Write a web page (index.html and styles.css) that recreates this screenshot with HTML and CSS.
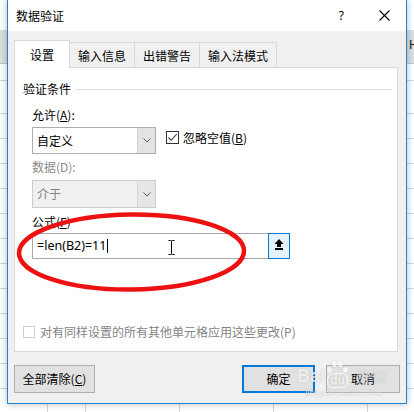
FILE: index.html
```html
<!DOCTYPE html>
<html lang="zh-CN">
<head>
<meta charset="utf-8">
<title>数据验证</title>
<link rel="stylesheet" href="styles.css">
</head>
<body>
<div class="sheet">
  <div class="edge-left"></div>
  <div class="dialog">
    <div class="titlebar">
      <span class="title">数据验证</span>
      <span class="help">?</span>
      <span class="close"><svg width="11" height="11" viewBox="0 0 11 11"><path d="M0.5 0.5L10.5 10.5M10.5 0.5L0.5 10.5" stroke="#000" stroke-width="1.1" fill="none"/></svg></span>
    </div>
    <div class="body">
      <div class="tabs">
        <div class="tab active">设置</div>
        <div class="tab">输入信息</div>
        <div class="tab">出错警告</div>
        <div class="tab">输入法模式</div>
      </div>
      <div class="panel">
        <div class="group-head"><span>验证条件</span><i class="rule"></i></div>
        <div class="fields">
          <div class="label">允许(<u>A</u>):</div>
          <div class="row">
            <div class="combo">
              <span class="combo-text">自定义</span>
              <span class="combo-btn"><svg width="8" height="5" viewBox="0 0 8 5"><path d="M0.5 0.5L4 4L7.5 0.5" stroke="#606060" fill="none"/></svg></span>
            </div>
            <div class="check">
              <span class="box checked"><svg width="11" height="11" viewBox="0 0 11 11"><path d="M1.5 5.5L4.2 8.3L9.8 2" stroke="#333" stroke-width="1.1" fill="none"/></svg></span>
              <span>忽略空值(<u>B</u>)</span>
            </div>
          </div>
          <div class="label disabled">数据(D):</div>
          <div class="combo disabled">
            <span class="combo-text">介于</span>
            <span class="combo-btn"><svg width="8" height="5" viewBox="0 0 8 5"><path d="M0.5 0.5L4 4L7.5 0.5" stroke="#606060" fill="none"/></svg></span>
          </div>
          <div class="label formula-label">公式(<u>F</u>)</div>
          <div class="formula">
            <span class="formula-text">=len(B2)=11<i class="caret"></i></span>
            <span class="ibeam"><svg width="7" height="15" viewBox="0 0 7 15"><path d="M0.5 0.5H2.5Q3.5 0.5 3.5 1.5V13.5Q3.5 14.5 2.5 14.5H0.5M6.5 0.5H4.5Q3.5 0.5 3.5 1.5M3.5 13.5Q3.5 14.5 4.5 14.5H6.5" stroke="#000" stroke-width="1" fill="none"/></svg></span>
            <span class="ref-btn"><svg width="10" height="11" viewBox="0 0 10 11"><polygon points="5,0 9.5,5 0.5,5" fill="#000"/><rect x="3" y="5" width="4" height="3" fill="#000"/><rect x="1" y="9" width="8" height="2" fill="#000"/></svg></span>
          </div>
        </div>
        <div class="apply"><span class="box"></span><span>对有同样设置的所有其他单元格应用这些更改(P)</span></div>
        <svg class="ellipse" width="240" height="90" viewBox="0 0 240 90"><ellipse cx="116.5" cy="43" rx="112.5" ry="37.5" fill="none" stroke="#ee1111" stroke-width="4.5" transform="rotate(-0.6 116.5 43)"/></svg>
      </div>
      <div class="buttons">
        <div class="btn clear">全部清除(<u>C</u>)</div>
        <div class="btn ok">确定</div>
        <div class="btn cancel">取消</div>
      </div>
    </div>
    <div class="watermark">
      <span class="wm-bai">Bai</span>
      <span class="wm-paw">
        <i class="toe t1"></i><i class="toe t2"></i><i class="toe t3"></i><i class="toe t4"></i>
        <span class="wm-du">du</span>
      </span>
      <span class="wm-jy">经验</span>
      <span class="wm-url">jingyan.baidu.com</span>
    </div>
  </div>
  <div class="edge-right"><div class="colhead">H</div></div>
</div>
</body>
</html>
```

FILE: styles.css
```css
html, body {
  margin: 0;
  padding: 0;
}
body {
  width: 414px;
  height: 412px;
  overflow: hidden;
  font-family: "Noto Sans CJK SC", "Noto Sans", sans-serif;
  font-size: 12px;
  color: #000;
}
u { text-decoration: underline; text-underline-offset: 1px; }

.sheet {
  display: flex;
  width: 414px;
  height: 412px;
  background-color: #fff;
  background-image:
    linear-gradient(to bottom, transparent 30px, #dedede 30px, #dedede 63px, #c6c6c6 63px, #c6c6c6 64px, transparent 64px),
    linear-gradient(to bottom, transparent 80px, #d6d6d6 80px, #d6d6d6 81px, transparent 81px),
    repeating-linear-gradient(to bottom, #d6d6d6 0 1px, transparent 1px 25px),
    repeating-linear-gradient(to right, #d6d6d6 0 1px, transparent 1px 94px);
  background-size: 100% 100%, 100% 100%, 100% 300px, 100% 100%;
  background-position: 0 0, 0 0, 0 113px, 85px 0;
  background-repeat: no-repeat, no-repeat, no-repeat, repeat-x;
}
.edge-left { width: 7px; flex: none; }
.edge-right {
  width: 7px;
  flex: none;
  overflow: hidden;
  padding-top: 30px;
}
.colhead {
  height: 33px;
  line-height: 30px;
  padding-left: 2px;
  font-family: "Liberation Sans", sans-serif;
  font-size: 13px;
  color: #222;
}

/* dialog */
.dialog {
  position: relative;
  flex: none;
  width: 400px;
  height: 404px;
  box-sizing: border-box;
  border: 1px solid #1a82d8;
  border-top: none;
  background: #f0f0f0;
  box-shadow: 0 0 7px rgba(0,0,0,0.28);
  z-index: 1;
}
.titlebar {
  height: 31px;
  background: #fff;
  display: flex;
  align-items: center;
  padding-left: 8px;
  padding-right: 16px;
}
.title { font-size: 12px; line-height: 16px; }
.help {
  margin-left: auto;
  font-family: "Noto Sans", sans-serif;
  font-size: 12px;
  line-height: 16px;
}
.close {
  margin-left: 35px;
  display: flex;
  width: 11px;
  height: 11px;
}

.body {
  padding: 9px 6px 0 6px;
}
.tabs {
  display: flex;
  align-items: flex-end;
  height: 27px;
}
.tab {
  height: 25px;
  box-sizing: border-box;
  border: 1px solid #d9d9d9;
  border-bottom: none;
  background: #f0f0f0;
  padding: 0 8px;
  line-height: 25px;
  margin-left: -1px;
  white-space: nowrap;
}
.tab.active {
  position: relative;
  z-index: 2;
  height: 28px;
  margin-bottom: -1px;
  margin-left: 0;
  padding: 2px 15px 0 15px;
  line-height: 24px;
  background: #fff;
}

.panel {
  position: relative;
  width: 384px;
  height: 285px;
  box-sizing: border-box;
  border: 1px solid #d9d9d9;
  background: #fff;
  padding: 13px 6px 0 8px;
  display: flex;
  flex-direction: column;
}
.group-head {
  display: flex;
  align-items: center;
  height: 16px;
  line-height: 16px;
}
.rule {
  flex: 1;
  height: 1px;
  background: #dcdcdc;
  margin-left: 5px;
}
.fields {
  margin-left: 9px;
  display: flex;
  flex-direction: column;
  align-items: flex-start;
}
.label {
  line-height: 16px;
  margin-top: 10px;
}
.label.disabled {
  margin-top: 5px;
  color: #8a8a8a;
}
.formula-label { margin-top: 6px; }
.row {
  display: flex;
  margin-top: 4px;
}
.combo {
  display: flex;
  width: 124px;
  height: 27px;
  box-sizing: border-box;
  border: 1px solid #adadad;
  background: #fff;
}
.combo-text {
  flex: 1;
  padding-left: 4px;
  line-height: 25px;
}
.combo-btn {
  width: 17px;
  background: #e3e3e3;
  border-left: 1px solid #d0d0d0;
  display: flex;
  align-items: center;
  justify-content: center;
}
.combo.disabled {
  margin-top: 5px;
  height: 28px;
  border-color: #cccccc;
  background: #f0f0f0;
  color: #838383;
}
.combo.disabled .combo-text { line-height: 26px; }
.combo.disabled .combo-btn { background: #e6e6e6; border-left-color: #d6d6d6; }

.check {
  margin-left: 10px;
  margin-top: 4px;
  display: flex;
  align-items: center;
  gap: 4px;
  height: 13px;
  line-height: 16px;
}
.box {
  width: 13px;
  height: 13px;
  box-sizing: border-box;
  border: 1px solid #333;
  background: #fff;
  display: flex;
  align-items: center;
  justify-content: center;
  flex: none;
}

.formula {
  position: relative;
  margin-top: 3px;
  width: 258px;
  height: 26px;
  box-sizing: border-box;
  border: 1px solid #a8a8a8;
  display: flex;
}
.formula-text {
  flex: 1;
  padding-left: 4px;
  font-family: "Noto Sans", sans-serif;
  font-size: 12.5px;
  line-height: 24px;
  display: flex;
  align-items: center;
}
.caret {
  display: inline-block;
  width: 1px;
  height: 14px;
  background: #000;
  margin-left: 1px;
}
.ibeam {
  position: absolute;
  left: 135px;
  top: 6px;
  display: flex;
}
.ref-btn {
  width: 22px;
  margin: -1px -1px -1px 0;
  box-sizing: border-box;
  border: 1px solid #0078d7;
  background: #e5f1fb;
  display: flex;
  justify-content: center;
  padding-top: 5px;
}

.apply {
  margin-top: auto;
  margin-bottom: 11px;
  display: flex;
  align-items: center;
  gap: 5px;
  line-height: 16px;
  color: #838383;
}
.apply .box {
  width: 12px;
  height: 12px;
  border-color: #cccccc;
}

.ellipse {
  position: absolute;
  left: 0;
  top: 141px;
  overflow: visible;
}

.buttons {
  display: flex;
  margin-top: 13px;
}
.btn {
  height: 28px;
  box-sizing: border-box;
  border: 1px solid #adadad;
  background: #e1e1e1;
  line-height: 26px;
  text-align: center;
}
.btn.clear { width: 81px; }
.btn.ok {
  width: 73px;
  margin-left: auto;
  border: 2px solid #0078d7;
  line-height: 24px;
}
.btn.cancel {
  width: 74px;
  margin-left: 11px;
}

/* watermark */
.watermark {
  position: absolute;
  left: 289px;
  top: 358px;
  width: 100px;
  height: 42px;
  color: rgba(255,255,255,0.8);
  pointer-events: none;
}
.watermark span, .watermark i { position: absolute; }
.wm-bai {
  left: 0;
  top: 9px;
  font-family: "Liberation Sans", sans-serif;
  font-weight: bold;
  font-size: 18px;
  line-height: 18px;
  text-shadow: 0 0 1px rgba(0,0,0,0.25);
}
.wm-paw { left: 30px; top: 2px; width: 20px; height: 30px; }
.toe {
  width: 5px;
  height: 6px;
  border-radius: 50%;
  background: rgba(255,255,255,0.7);
  box-shadow: 0 0 1px rgba(0,0,0,0.25);
}
.t1 { left: 0; top: 7px; }
.t2 { left: 5px; top: 1px; }
.t3 { left: 11px; top: 1px; }
.t4 { left: 16px; top: 7px; }
.wm-du {
  left: 0;
  top: 13px;
  width: 21px;
  height: 15px;
  border-radius: 6px 6px 5px 5px;
  border: 1px solid rgba(255,255,255,0.7);
  box-sizing: border-box;
  color: rgba(255,255,255,0.9);
  text-shadow: 0 0 1px rgba(0,0,0,0.3);
  font-family: "Liberation Sans", sans-serif;
  font-weight: bold;
  font-size: 12px;
  line-height: 13px;
  text-align: center;
}
.wm-jy {
  left: 60px;
  top: 10px;
  font-size: 15px;
  line-height: 16px;
  font-weight: bold;
  color: rgba(255,255,255,0.45);
  text-shadow: 0 0 1px rgba(0,0,0,0.15);
}
.wm-url {
  left: 8px;
  top: 31px;
  font-family: "Liberation Sans", sans-serif;
  font-size: 9px;
  line-height: 9px;
  letter-spacing: 0.3px;
  color: rgba(255,255,255,0.8);
  text-shadow: 0 0 1px rgba(0,0,0,0.25);
}
```
